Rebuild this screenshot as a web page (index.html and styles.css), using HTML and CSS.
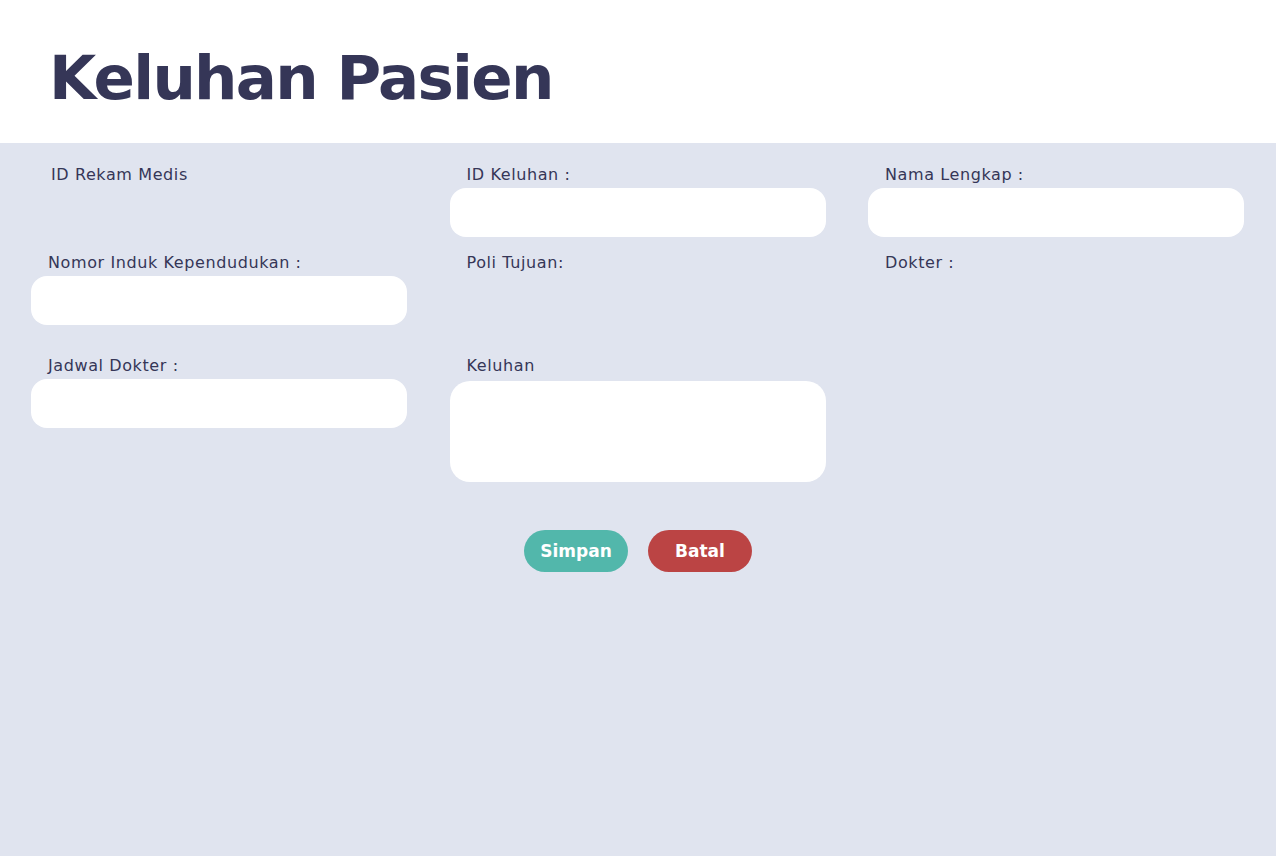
FILE: index.html
```html
<!DOCTYPE html>
<html lang="id">
<head>
<meta charset="utf-8">
<title>Keluhan Pasien</title>
<link rel="stylesheet" href="styles.css">
</head>
<body>
<header class="page-header">
  <h1 class="page-title">Keluhan Pasien</h1>
</header>
<main class="content">
  <form class="form">
    <div class="row row-1">
      <div class="field">
        <label class="label label-first">ID Rekam Medis</label>
      </div>
      <div class="field">
        <label class="label">ID Keluhan :</label>
        <input class="input" type="text">
      </div>
      <div class="field">
        <label class="label">Nama Lengkap :</label>
        <input class="input" type="text">
      </div>
    </div>
    <div class="row row-2">
      <div class="field">
        <label class="label">Nomor Induk Kependudukan :</label>
        <input class="input" type="text">
      </div>
      <div class="field">
        <label class="label">Poli Tujuan:</label>
      </div>
      <div class="field">
        <label class="label">Dokter :</label>
      </div>
    </div>
    <div class="row row-3">
      <div class="field">
        <label class="label">Jadwal Dokter :</label>
        <input class="input" type="text">
      </div>
      <div class="field">
        <label class="label">Keluhan</label>
        <textarea class="textarea"></textarea>
      </div>
      <div class="field"></div>
    </div>
    <div class="actions">
      <button type="button" class="btn btn-save">Simpan</button>
      <button type="button" class="btn btn-cancel">Batal</button>
    </div>
  </form>
</main>
</body>
</html>
```
FILE: styles.css
```css
* { box-sizing: border-box; }
html, body {
  margin: 0;
  padding: 0;
  height: 100%;
}
body {
  background: #e0e4ef;
  font-family: "DejaVu Sans", "Noto Sans", sans-serif;
  color: #353657;
}
.page-header {
  background: #ffffff;
  height: 143px;
  padding: 38px 0 0 49px;
}
.page-title {
  margin: 0;
  font-size: 61px;
  line-height: 80px;
  font-weight: 700;
  color: #353657;
  letter-spacing: -1.7px;
}
.content {
  padding: 20px 0 0 31px;
}
.row {
  display: grid;
  grid-template-columns: repeat(3, 376px);
  column-gap: 42.5px;
}
.row-2 { margin-top: 14px; }
.row-3 { margin-top: 29px; }
.field {
  display: flex;
  flex-direction: column;
}
.label {
  display: block;
  font-size: 16px;
  line-height: 24px;
  padding-left: 17px;
  letter-spacing: 0.6px;
  color: #353657;
}
.label-first { padding-left: 20px; }
.input {
  margin-top: 1px;
  height: 49px;
  width: 376px;
  border: none;
  border-radius: 16px;
  background: #ffffff;
  outline: none;
}
.textarea {
  margin-top: 3px;
  height: 101px;
  width: 376px;
  border: none;
  border-radius: 20px;
  background: #ffffff;
  resize: none;
  outline: none;
}
.actions {
  display: flex;
  justify-content: center;
  gap: 20px;
  margin-top: 48px;
  padding-right: 31px;
}
.btn {
  width: 104px;
  height: 42px;
  border: none;
  border-radius: 21px;
  color: #ffffff;
  font-family: inherit;
  font-size: 17px;
  font-weight: 700;
  padding: 0;
}
.btn-save { background: #52b7ab; }
.btn-cancel { background: #bb4444; }
```
